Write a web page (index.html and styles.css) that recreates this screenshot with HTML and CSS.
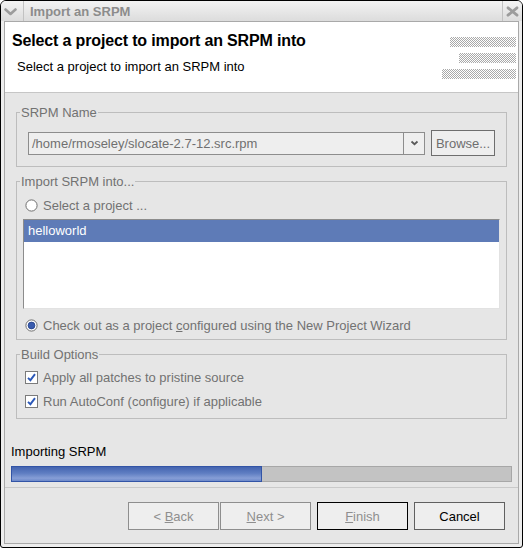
FILE: index.html
```html
<!DOCTYPE html>
<html>
<head>
<meta charset="utf-8">
<link rel="stylesheet" href="styles.css">
</head>
<body>
<div class="window">
  <div class="titlebar">
    <span class="menu-btn">
      <svg width="13" height="8" viewBox="0 0 13 8"><path d="M1.5 1.5 L6.5 6 L11.5 1.5" stroke="#9c9c9c" stroke-width="2.6" fill="none" stroke-linecap="round" stroke-linejoin="round"/></svg>
    </span>
    <span class="title">Import an SRPM</span>
    <span class="close-btn">
      <svg width="13" height="11" viewBox="0 0 13 11"><path d="M2 1.8 L11 9.2 M11 1.8 L2 9.2" stroke="#9c9c9c" stroke-width="2.8" stroke-linecap="round"/></svg>
    </span>
  </div>
  <div class="frame">
    <div class="client">
      <header class="banner">
        <div class="banner-text">
          <h1>Select a project to import an SRPM into</h1>
          <p class="sub">Select a project to import an SRPM into</p>
        </div>
        <div class="art">
          <span class="stripe s1"></span>
          <span class="stripe s2"></span>
          <span class="stripe s3"></span>
        </div>
      </header>

      <div class="content">
        <fieldset class="group g1">
          <legend>SRPM Name</legend>
          <div class="g1-body">
            <div class="combo">
              <span class="combo-text">/home/rmoseley/slocate-2.7-12.src.rpm</span>
              <span class="combo-btn">
                <svg width="9" height="6" viewBox="0 0 9 6"><path d="M1.5 1.5 L4.5 4.2 L7.5 1.5" stroke="#5a5a5a" stroke-width="1.8" fill="none"/></svg>
              </span>
            </div>
            <span class="btn browse"><span>Browse...</span></span>
          </div>
        </fieldset>

        <fieldset class="group g2">
          <legend>Import SRPM into...</legend>
          <div class="g2-body">
            <div class="opt radio-row">
              <svg width="13" height="13" viewBox="0 0 13 13"><circle cx="6.5" cy="6.5" r="5.6" fill="#fff" stroke="#6f6f6f" stroke-width="1"/></svg>
              <span class="label">Select a project ...</span>
            </div>
            <div class="list">
              <div class="list-row selected">helloworld</div>
            </div>
            <div class="opt radio-row second">
              <svg width="13" height="13" viewBox="0 0 13 13"><circle cx="6.5" cy="6.5" r="5.6" fill="#fff" stroke="#6f6f6f" stroke-width="1"/><circle cx="6.5" cy="6.5" r="3.4" fill="#3a5cae" stroke="#1f3d88" stroke-width="0.8"/></svg>
              <span class="label">Check out as a project <u>c</u>onfigured using the New Project Wizard</span>
            </div>
          </div>
        </fieldset>

        <fieldset class="group g3">
          <legend>Build Options</legend>
          <div class="g3-body">
            <div class="opt">
              <svg width="13" height="13" viewBox="0 0 13 13"><rect x="0.5" y="0.5" width="12" height="12" fill="#fff" stroke="#7b7b7b"/><path d="M3 6.8 L5.4 9.2 L10 3.2" stroke="#2b58b8" stroke-width="1.9" fill="none"/></svg>
              <span class="label">Apply all patches to pristine source</span>
            </div>
            <div class="opt">
              <svg width="13" height="13" viewBox="0 0 13 13"><rect x="0.5" y="0.5" width="12" height="12" fill="#fff" stroke="#7b7b7b"/><path d="M3 6.8 L5.4 9.2 L10 3.2" stroke="#2b58b8" stroke-width="1.9" fill="none"/></svg>
              <span class="label">Run AutoConf (configure) if applicable</span>
            </div>
          </div>
        </fieldset>
      </div>

      <div class="progress-label">Importing SRPM</div>
      <div class="progress"><div class="progress-fill" style="width:50%"></div></div>
      <div class="separator"></div>
      <div class="buttons">
        <span class="btn wiz disabled"><span>&lt; <u>B</u>ack</span></span>
        <span class="btn wiz disabled next"><span><u>N</u>ext &gt;</span></span>
        <span class="btn wiz disabled default"><span><u>F</u>inish</span></span>
        <span class="btn wiz cancel"><span>Cancel</span></span>
      </div>
    </div>
  </div>
</div>
</body>
</html>
```

FILE: styles.css
```css
* { box-sizing: border-box; }
html, body { margin: 0; padding: 0; background: #fff; }
body {
  font-family: "Liberation Sans", Arial, sans-serif;
  font-size: 13px;
  line-height: 15px;
  color: #000;
}

.window {
  width: 523px;
  height: 548px;
  border: 1px solid #000;
  border-radius: 6px 6px 3px 3px;
  background: #ededed;
  display: flex;
  flex-direction: column;
  overflow: hidden;
}

.titlebar {
  height: 20px;
  flex: none;
  display: flex;
  align-items: center;
  background: linear-gradient(#f3f3f3, #dcdcdc);
}
.menu-btn {
  width: 23px;
  height: 20px;
  display: flex;
  align-items: center;
  padding-left: 3px;
  padding-top: 1px;
  border-right: 1px solid #c2c2c2;
}
.title {
  flex: 1;
  padding-left: 6px;
  font-weight: bold;
  color: #8c8c8c;
}
.close-btn {
  width: 20px;
  height: 20px;
  display: flex;
  align-items: center;
  padding-left: 3px;
  border-left: 1px solid #c2c2c2;
}

.frame {
  flex: 1;
  padding: 0 3px 3px;
  display: flex;
}
.client {
  flex: 1;
  border: 1px solid #a9a9a9;
  background: #e6e6e6;
  display: flex;
  flex-direction: column;
}

.banner {
  height: 71px;
  flex: none;
  background: #fff;
  border-bottom: 1px solid #c6c6c6;
  display: flex;
  justify-content: space-between;
  padding: 9px 2px 0 7px;
}
.banner h1 {
  margin: 0;
  font-size: 16px;
  line-height: 19px;
  font-weight: bold;
  letter-spacing: -0.15px;
}
.banner .sub {
  margin: 9px 0 0 5px;
}
.art {
  display: flex;
  flex-direction: column;
  align-items: flex-end;
  gap: 6px;
  padding-top: 6px;
}
.stripe {
  display: block;
  height: 10px;
  background-image: conic-gradient(#a9a9a9 25%, #fff 0 50%, #a9a9a9 0 75%, #fff 0);
  background-size: 2px 2px;
}
.s1 { width: 66px; }
.s2 { width: 57px; }
.s3 { width: 74px; }

.content {
  padding: 0 11px;
}
.group {
  margin: 0;
  padding: 0;
  min-width: 0;
  border: 1px solid #bdbdbd;
}
.group legend {
  margin-left: 3px;
  padding: 0 1px;
  color: #727272;
  line-height: 15px;
}
.g1 { margin-top: 12px; }
.g1-body {
  display: flex;
  align-items: center;
  padding: 10px 11px 10px;
  height: 46px;
}
.combo {
  display: flex;
  width: 397px;
  height: 23px;
}
.combo-text {
  flex: 1;
  border: 1px solid #8d8d8d;
  background: #eeeeee;
  color: #707070;
  padding: 3px 0 0 3px;
}
.combo-btn {
  width: 21px;
  border: 1px solid #8d8d8d;
  border-left: none;
  background: #efefef;
  display: flex;
  align-items: center;
  justify-content: center;
}
.btn {
  display: flex;
  align-items: center;
  justify-content: center;
  background: #eeeeee;
}
.browse {
  width: 64px;
  height: 26px;
  margin-left: 6px;
  border: 1px solid #6e6e6e;
  color: #6e6e6e;
}

.g2 { margin-top: 7px; }
.g2-body {
  padding: 9px 6px 6px;
}
.opt {
  display: flex;
  align-items: center;
  height: 15px;
  color: #727272;
}
.opt svg { flex: none; }
.opt .label { margin-left: 5px; }
.radio-row { padding-left: 2px; }
.radio-row.second { margin-top: 9px; }
.list {
  margin-top: 6px;
  height: 90px;
  background: #fff;
  border: 1px solid #e2e2e2;
  border-top-color: #8c8c8c;
  border-left-color: #8c8c8c;
}
.list-row {
  height: 22px;
  padding: 3px 0 0 4px;
}
.list-row.selected {
  background: #5e7bb7;
  color: #fff;
}

.g3 { margin-top: 7px; }
.g3-body {
  padding: 8px 8px 9px;
  display: flex;
  flex-direction: column;
  gap: 9px;
}

.progress-label {
  margin-top: 25px;
  padding-left: 6px;
}
.progress {
  margin: 7px 6px 0;
  height: 16px;
  background: #c3c3c3;
  box-shadow: inset 0 0 0 1px #a7a7a7;
}
.progress-fill {
  height: 100%;
  border: 1px solid #3254a6;
  background: linear-gradient(#4464b0, #5f7ec2 45%, #869ed6 80%, #6d89c9);
}
.separator {
  margin-top: 5px;
  height: 1px;
  background: #c9c9c9;
}
.buttons {
  display: flex;
  justify-content: flex-end;
  padding: 14px 13px 0 0;
}
.wiz {
  width: 91px;
  height: 28px;
  border: 1px solid #8e8e8e;
}
.wiz.disabled { color: #8e8e8e; }
.wiz.next { margin-left: 1px; }
.wiz.default { margin-left: 6px; border-color: #000; }
.wiz.cancel { margin-left: 6px; border-color: #606060; color: #000; }
```
